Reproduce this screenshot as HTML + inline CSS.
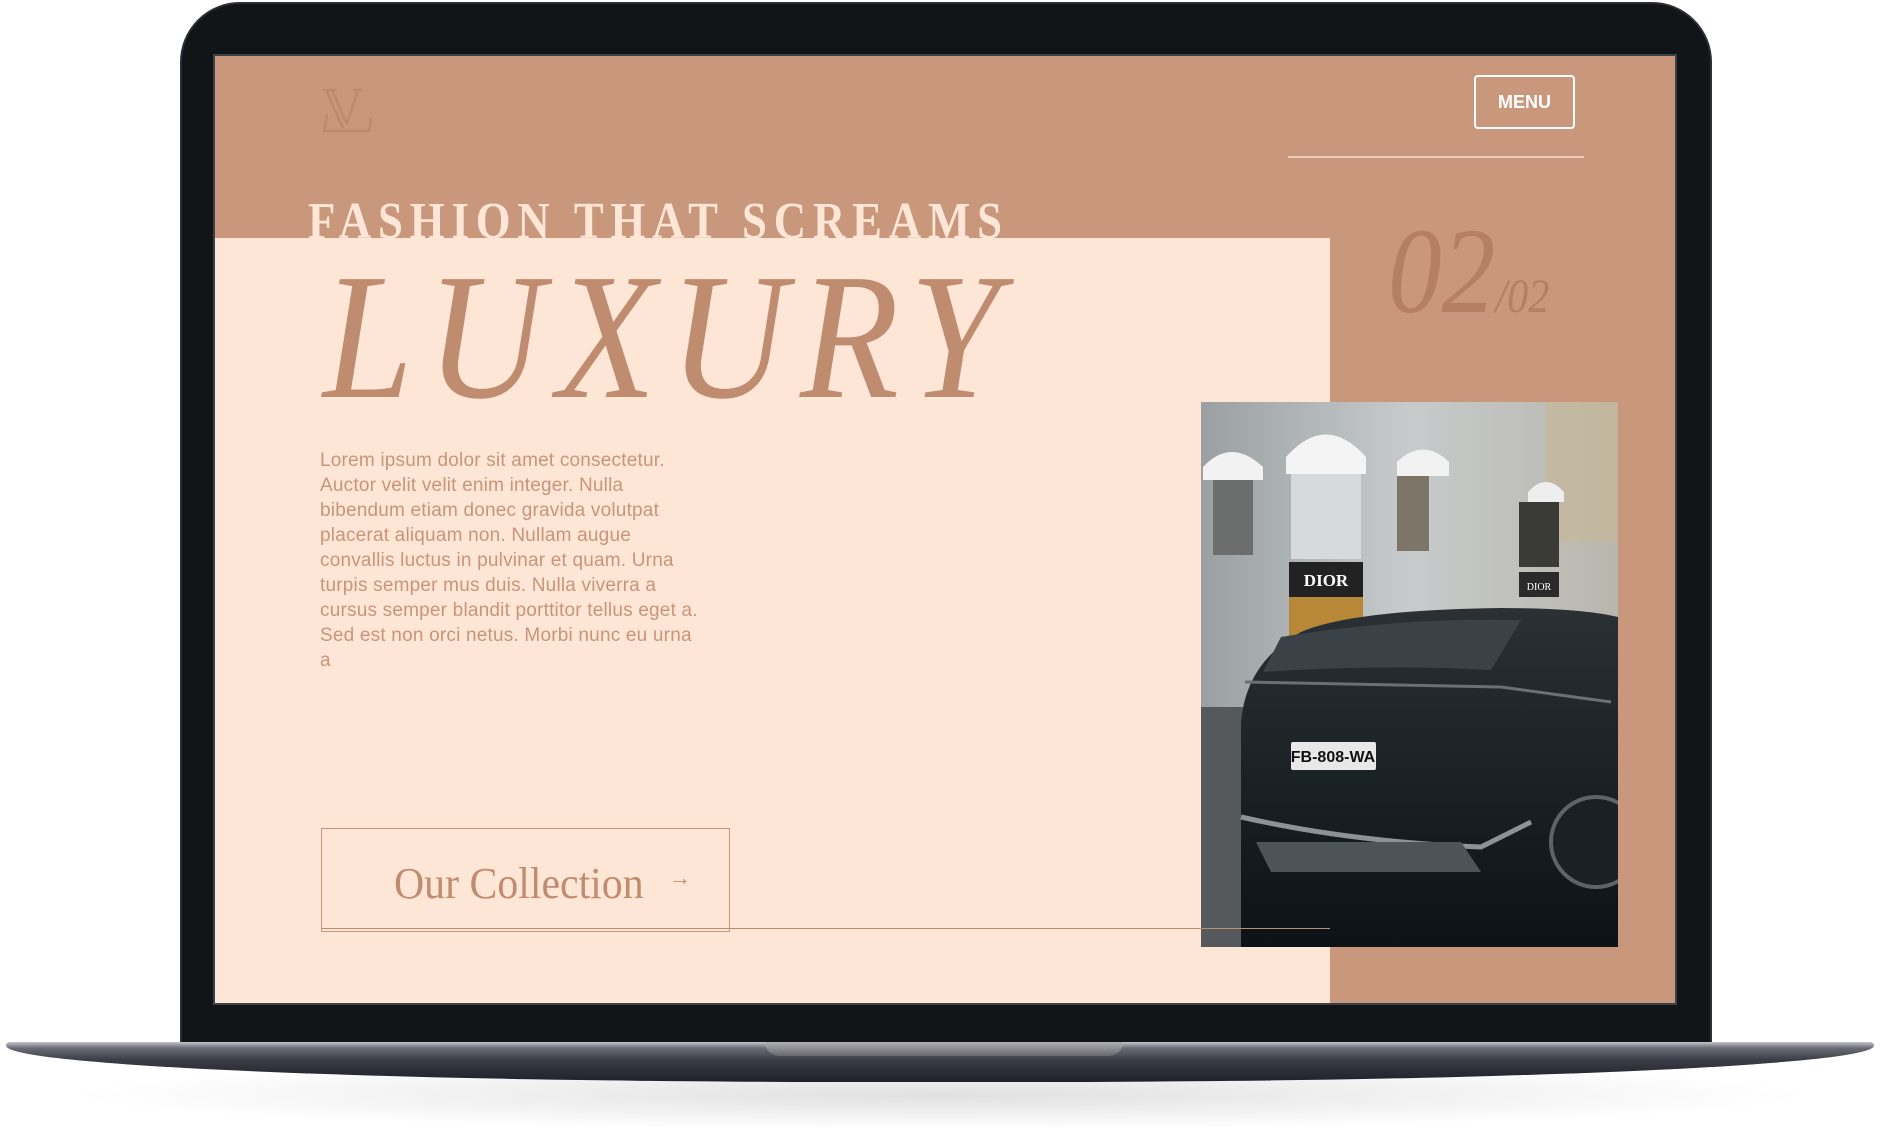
<!DOCTYPE html>
<html><head><meta charset="utf-8"><style>
*{margin:0;padding:0;box-sizing:border-box}
body{width:1880px;height:1148px;background:#fff;position:relative;overflow:hidden;font-family:"Liberation Sans",sans-serif}
.abs{position:absolute}
</style></head><body>
<!-- shadow -->
<div class="abs" style="left:60px;top:1060px;width:1760px;height:70px;border-radius:50%;background:radial-gradient(ellipse at center,rgba(0,0,0,.12),rgba(0,0,0,0) 70%)"></div>
<!-- laptop lid -->
<div class="abs" style="left:180px;top:2px;width:1532px;height:1044px;background:#111518;border-radius:60px 60px 0 0;border:2px solid #2b2f33"></div>
<!-- screen -->
<div class="abs" style="left:213px;top:54px;width:1464px;height:951px;background:#c9977c;overflow:hidden;border:2px solid #3a4047">
  <div class="abs" style="left:0;top:182px;width:1115px;height:770px;background:#fde6d6"></div>
  <!-- logo -->
  <svg class="abs" style="left:106px;top:32px" width="54" height="46" viewBox="0 0 54 46">
    <g fill="none" stroke="#bd8a6e" stroke-width="2.5">
      <path d="M5 2 L22 40 M11 2 L26 36 M37 2 L26 36"/>
      <path d="M2 2h14 M32 2h10"/>
      <path d="M6 26 Q4 40 3 43 H48 Q49 38 50 30"/>
    </g>
  </svg>
  <!-- menu -->
  <div class="abs" style="left:1259px;top:19px;width:101px;height:54px;border:2px solid #fff;border-radius:4px;color:#fff;font-weight:bold;font-size:18px;text-align:center;line-height:50px">MENU</div>
  <div class="abs" style="left:1073px;top:100px;width:296px;height:2px;background:#efcdb8"></div>
  <!-- fashion text -->
  <div class="abs" style="left:93px;top:136px;font-family:'Liberation Serif',serif;font-weight:bold;font-size:52px;color:#fde6d6;letter-spacing:8px;transform:scaleX(0.86);transform-origin:left top;white-space:nowrap;line-height:60px;height:46px;overflow:hidden">FASHION THAT SCREAMS</div>
  <!-- luxury -->
  <div class="abs" style="left:108px;top:176px;font-family:'Liberation Serif',serif;font-style:italic;font-size:180px;color:#c08c70;white-space:nowrap;line-height:210px;transform:scaleX(0.9);transform-origin:left top;letter-spacing:15px">LUXURY</div>
  <!-- 02/02 -->
  <div class="abs" style="left:1173px;top:146px;font-family:'Liberation Serif',serif;font-style:italic;color:#b47f63;white-space:nowrap;transform:scaleX(0.88);transform-origin:left top"><span style="font-size:122px">02</span><span style="font-size:48px">/02</span></div>
  <!-- paragraph -->
  <div class="abs" style="left:105px;top:392px;width:380px;font-size:19px;line-height:25px;color:#c9957a;letter-spacing:0.2px">Lorem ipsum dolor sit amet consectetur. Auctor velit velit enim integer. Nulla bibendum etiam donec gravida volutpat placerat aliquam non. Nullam augue convallis luctus in pulvinar et quam. Urna turpis semper mus duis. Nulla viverra a cursus semper blandit porttitor tellus eget a. Sed est non orci netus. Morbi nunc eu urna a</div>
  <!-- button -->
  <div class="abs" style="left:106px;top:772px;width:409px;height:104px;border:1px solid #c9957a"></div>
  <div class="abs" style="left:179px;top:802px;font-family:'Liberation Serif',serif;font-size:44px;color:#c08c70;white-space:nowrap;transform:scaleX(0.95);transform-origin:left top">Our Collection</div>
  <div class="abs" style="left:454px;top:809px;font-size:22px;color:#c08c70">→</div>
  <!-- photo -->
  <svg class="abs" style="left:986px;top:346px" width="417" height="545" viewBox="0 0 417 545">
    <defs>
      <linearGradient id="b" x1="0" y1="0" x2="1" y2="0"><stop offset="0" stop-color="#9aa0a2"/><stop offset=".5" stop-color="#c7cbcc"/><stop offset="1" stop-color="#b9b6ad"/></linearGradient>
      <linearGradient id="c" x1="0" y1="0" x2="0" y2="1"><stop offset="0" stop-color="#2a3034"/><stop offset="1" stop-color="#0b1316"/></linearGradient>
    </defs>
    <rect width="417" height="545" fill="url(#b)"/>
    <rect x="345" y="0" width="72" height="140" fill="#c9b58e" opacity=".5"/>
    <path d="M2 65 Q30 35 62 65 V78 H2Z" fill="#f2f2f2"/>
    <path d="M85 55 Q125 10 165 55 V72 H85Z" fill="#f4f4f4"/>
    <path d="M196 60 Q222 35 248 60 V74 H196Z" fill="#f2f2f2"/>
    <path d="M327 90 Q345 70 363 90 V100 H327Z" fill="#eee"/>
    <rect x="90" y="72" width="70" height="85" fill="#d7dadb"/>
    <rect x="12" y="78" width="40" height="75" fill="#6b6e6d"/>
    <rect x="196" y="74" width="32" height="75" fill="#7d7668"/>
    <rect x="88" y="160" width="74" height="35" fill="#222"/>
    <text x="125" y="184" text-anchor="middle" fill="#fff" font-family="Liberation Serif,serif" font-weight="bold" font-size="17">DIOR</text>
    <rect x="88" y="195" width="74" height="50" fill="#b88838"/>
    <rect x="318" y="100" width="40" height="65" fill="#3a3a36"/>
    <rect x="318" y="170" width="40" height="25" fill="#2a2a2a"/>
    <text x="338" y="188" text-anchor="middle" fill="#fff" font-family="Liberation Serif,serif" font-size="10">DIOR</text>
    <rect x="0" y="305" width="60" height="240" fill="#55595b"/>
    <path d="M40 545 V320 Q45 260 100 230 Q150 208 300 206 Q380 206 417 215 V545Z" fill="url(#c)"/>
    <path d="M80 235 Q200 215 320 218 L290 268 Q180 262 62 270Z" fill="#3b4247"/>
    <path d="M44 280 L300 285 L410 300" stroke="#6a7074" stroke-width="3" fill="none"/>
    <rect x="90" y="340" width="85" height="28" fill="#e8e8e8" rx="2"/>
    <text x="132" y="360" text-anchor="middle" fill="#111" font-family="Liberation Sans,sans-serif" font-weight="bold" font-size="16">FB-808-WA</text>
    <path d="M40 415 Q150 440 280 445 L330 420" stroke="#8d9296" stroke-width="5" fill="none"/>
    <path d="M55 440 H260 L280 470 H70Z" fill="#4d5458"/>
    <circle cx="395" cy="440" r="45" fill="#1a2023" stroke="#5d6468" stroke-width="4"/>
  </svg>
  <div class="abs" style="left:106px;top:872px;width:1009px;height:1px;background:#c08c70"></div>
</div>
<!-- base -->
<div class="abs" style="left:6px;top:1042px;width:1868px;height:40px;background:linear-gradient(#c4c5ca,#6a6c76 15%,#3a3c46 45%,#1f2029);border-radius:4px 4px 50% 50% / 4px 4px 100% 100%"></div>
<div class="abs" style="left:765px;top:1042px;width:358px;height:14px;background:linear-gradient(#b0afb5,#6a6970);border-radius:0 0 14px 14px"></div>
</body></html>
